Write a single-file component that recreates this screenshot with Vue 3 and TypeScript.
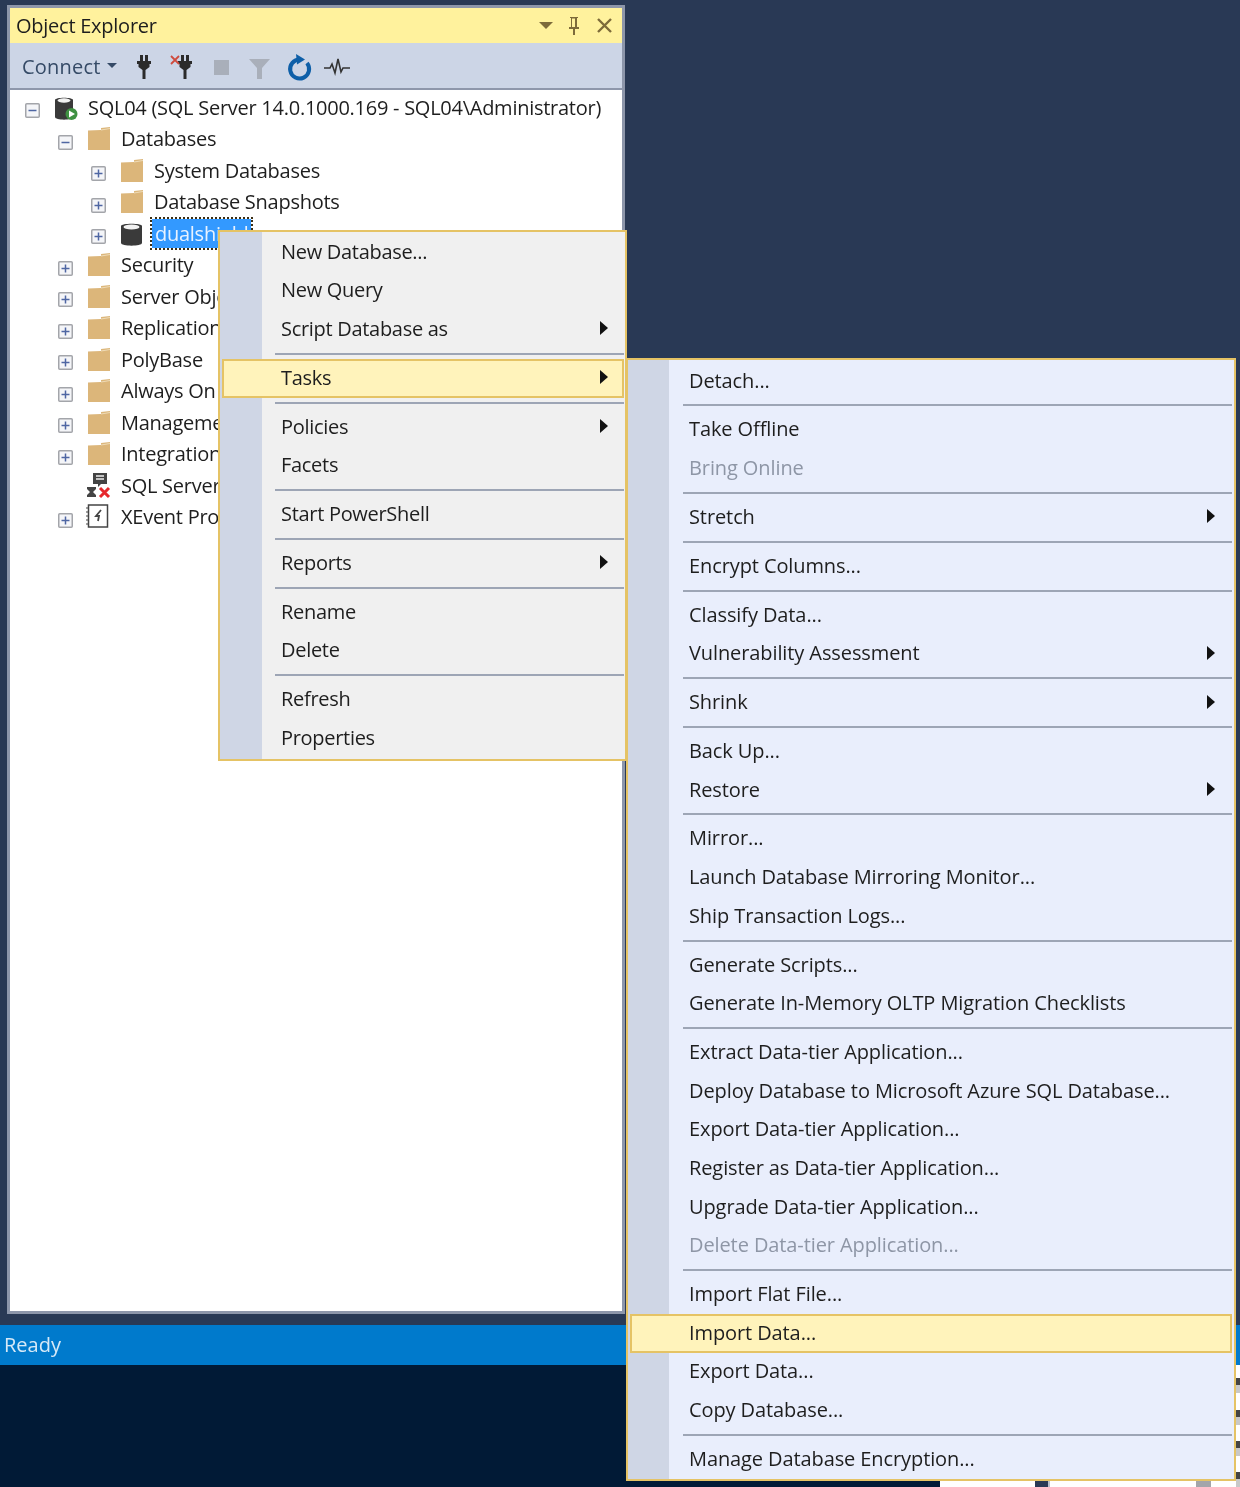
<script setup lang="ts">
type MenuRow = { sep?: boolean; label?: string; arrow?: boolean; off?: boolean; hot?: boolean }
type TreeRow = { label: string; depth: number; box?: '+' | '-' | ''; icon: 'server' | 'folder' | 'db' | 'agent' | 'xevent'; selected?: boolean }

const S: MenuRow = { sep: true }
const mainRows: MenuRow[] = [
  { label: 'New Database...' }, { label: 'New Query' }, { label: 'Script Database as', arrow: true }, S,
  { label: 'Tasks', arrow: true, hot: true }, S,
  { label: 'Policies', arrow: true }, { label: 'Facets' }, S,
  { label: 'Start PowerShell' }, S,
  { label: 'Reports', arrow: true }, S,
  { label: 'Rename' }, { label: 'Delete' }, S,
  { label: 'Refresh' }, { label: 'Properties' }
]
const subRows: MenuRow[] = [
  { label: 'Detach...' }, S,
  { label: 'Take Offline' }, { label: 'Bring Online', off: true }, S,
  { label: 'Stretch', arrow: true }, S,
  { label: 'Encrypt Columns...' }, S,
  { label: 'Classify Data...' }, { label: 'Vulnerability Assessment', arrow: true }, S,
  { label: 'Shrink', arrow: true }, S,
  { label: 'Back Up...' }, { label: 'Restore', arrow: true }, S,
  { label: 'Mirror...' }, { label: 'Launch Database Mirroring Monitor...' }, { label: 'Ship Transaction Logs...' }, S,
  { label: 'Generate Scripts...' }, { label: 'Generate In-Memory OLTP Migration Checklists' }, S,
  { label: 'Extract Data-tier Application...' }, { label: 'Deploy Database to Microsoft Azure SQL Database...' },
  { label: 'Export Data-tier Application...' }, { label: 'Register as Data-tier Application...' },
  { label: 'Upgrade Data-tier Application...' }, { label: 'Delete Data-tier Application...', off: true }, S,
  { label: 'Import Flat File...' }, { label: 'Import Data...', hot: true }, { label: 'Export Data...' }, { label: 'Copy Database...' }, S,
  { label: 'Manage Database Encryption...' }
]
const treeRows: TreeRow[] = [
  { label: 'SQL04 (SQL Server 14.0.1000.169 - SQL04\\Administrator)', depth: 0, box: '-', icon: 'server' },
  { label: 'Databases', depth: 1, box: '-', icon: 'folder' },
  { label: 'System Databases', depth: 2, box: '+', icon: 'folder' },
  { label: 'Database Snapshots', depth: 2, box: '+', icon: 'folder' },
  { label: 'dualshield', depth: 2, box: '+', icon: 'db', selected: true },
  { label: 'Security', depth: 1, box: '+', icon: 'folder' },
  { label: 'Server Objects', depth: 1, box: '+', icon: 'folder' },
  { label: 'Replication', depth: 1, box: '+', icon: 'folder' },
  { label: 'PolyBase', depth: 1, box: '+', icon: 'folder' },
  { label: 'Always On High Availability', depth: 1, box: '+', icon: 'folder' },
  { label: 'Management', depth: 1, box: '+', icon: 'folder' },
  { label: 'Integration Services Catalogs', depth: 1, box: '+', icon: 'folder' },
  { label: 'SQL Server Agent', depth: 1, box: '', icon: 'agent' },
  { label: 'XEvent Profiler', depth: 1, box: '+', icon: 'xevent' }
]
</script>

<template>
  <div class="page">
    <div class="desktop">
      <section class="panel">
        <header class="title">
          <span class="title-text">Object Explorer</span>
          <svg class="title-icons" width="76" height="20" viewBox="0 0 76 20">
            <path d="M1 6h14l-7 7z" fill="#7d6b3a" />
            <path d="M32 1h8v1h-1v9h2v2h-4v6h-2v-6h-4v-2h2V2h-1zM34 2.500v8.500h3V2.500z" fill="#7d6b3a" />
            <path d="M60 3l13 13M73 3L60 16" stroke="#7d6b3a" stroke-width="2.400" fill="none" />
          </svg>
        </header>
        <div class="toolbar">
          <span class="connect">Connect</span>
          <span class="caret"></span>
          <svg class="tools" width="222" height="30" viewBox="0 0 222 30">
            <g fill="#2b2b2b">
              <path d="M9 2h3v6H9zM14 2h3v6h-3zM6 8h14v3h-1.500v3l-4 3v9h-3v-9l-4-3v-3H6z" />
              <path d="M50 2h3v6h-3zM55 2h3v6h-3zM47 8h14v3h-1.500v3l-4 3v9h-3v-9l-4-3v-3H47z" />
            </g>
            <path d="M40 3l8 8M48 3l-8 8" stroke="#cf4b3e" stroke-width="1.800" fill="none" />
            <rect x="83" y="7" width="15" height="15" fill="#a9afba" />
            <path d="M118 6h21l-8 9v11h-5V15z" fill="#a9afba" />
            <path d="M169 6.500a9.500 9.500 0 1 0 7 3.500" stroke="#0e5fa8" stroke-width="4" fill="none" />
            <path d="M165 1l9 5.500-8 5z" fill="#0e5fa8" />
            <path d="M193 15h6l2-4 3 9 3-14 3 13 2-4h7" stroke="#333" stroke-width="1.600" fill="none" />
          </svg>
        </div>
        <ul class="tree">
          <li v-for="row in treeRows" :key="row.label" class="tree-row" :class="`depth-${row.depth}`">
            <span class="box" :class="{ none: !row.box }">
              <svg v-if="row.box" width="15" height="15" viewBox="0 0 15 15">
                <rect x=".75" y=".75" width="13.500" height="13.500" rx="1" fill="#f4f5f8" stroke="#a3a5aa" stroke-width="1.500" />
                <path :d="row.box === '+' ? 'M3.500 7.500h8M7.500 3.500v8' : 'M3.500 7.500h8'" stroke="#4e66a3" stroke-width="1.500" />
              </svg>
            </span>
            <svg class="ico" width="26" height="26" viewBox="0 0 26 26">
              <template v-if="row.icon === 'folder'">
                <path d="M2 7V4.500L15 4V2l9-1v23H2z" fill="#dcb67a" />
                <path d="M15 4l9-1.500" stroke="#efdcb8" stroke-width="1" />
              </template>
              <template v-else-if="row.icon === 'db'">
                <path d="M2 5c0-3 21-3 21 0v17c0 3.500-21 3.500-21 0z" fill="#3a3a3a" />
                <ellipse cx="12.500" cy="6" rx="8" ry="2.500" fill="#f2f2f2" />
              </template>
              <template v-else-if="row.icon === 'server'">
                <path d="M2 5c0-3 18-3 18 0v17c0 3.500-18 3.500-18 0z" fill="#3a3a3a" />
                <ellipse cx="11" cy="5.500" rx="6.500" ry="2.200" fill="#f2f2f2" />
                <circle cx="18.500" cy="19" r="6" fill="#3f9142" />
                <path d="M16 15.500l6 3.500-6 3.500z" fill="#fff" />
              </template>
              <template v-else-if="row.icon === 'agent'">
                <path d="M7 0h14v11h-6l-3 3v-3H7z" fill="#444" />
                <path d="M10 3h8M10 6h8" stroke="#eee" stroke-width="1.500" />
                <path d="M1 14h9v2l-3 3 3 3v2H1v-2l3-3-3-3z" fill="#444" />
                <path d="M14 15l9 9M23 15l-9 9" stroke="#e6282c" stroke-width="3" />
              </template>
              <template v-else>
                <rect x="2.500" y="1" width="19" height="22" fill="#fff" stroke="#444" stroke-width="1.500" />
                <path d="M0 4h3M0 8h3M0 12h3M0 16h3M0 20h3" stroke="#444" />
                <path d="M15 6l-5 6h3l-1 5" stroke="#444" stroke-width="1.800" fill="none" />
              </template>
            </svg>
            <span class="tree-label" :class="{ selected: row.selected }">{{ row.label }}</span>
          </li>
        </ul>
      </section>
      <footer class="status">Ready</footer>
      <div class="taskbar"></div>
    </div>

    <div class="under-bottom">
      <span class="under-white a"></span>
      <span class="under-dark"></span>
      <span class="under-white b"></span>
    </div>
    <div class="under-right"></div>

    <nav class="menu main-menu">
      <template v-for="(row, i) in mainRows" :key="i">
        <div v-if="row.sep" class="sep"></div>
        <div v-else class="item" :class="{ hot: row.hot, off: row.off }">
          <span>{{ row.label }}</span><i v-if="row.arrow" class="arrow"></i>
        </div>
      </template>
    </nav>

    <nav class="menu sub-menu">
      <template v-for="(row, i) in subRows" :key="i">
        <div v-if="row.sep" class="sep"></div>
        <div v-else class="item" :class="{ hot: row.hot, off: row.off }">
          <span>{{ row.label }}</span><i v-if="row.arrow" class="arrow"></i>
        </div>
      </template>
    </nav>
  </div>
</template>

<style>
html, body { margin: 0; background: #293955; }
</style>

<style scoped>
.page {
  position: relative;
  width: 1240px;
  height: 1487px;
  overflow: hidden;
  font-family: "Open Sans", "Noto Sans", sans-serif;
  font-size: 20px;
  color: #1e1e1e;
  background: #293955;
  filter: blur(.35px);
}
.desktop { display: flex; flex-direction: column; height: 100%; }
.panel {
  box-sizing: border-box;
  width: 618px;
  height: 1309px;
  margin: 5px 0 0 7px;
  border: 3px solid #8d96aa;
  display: flex;
  flex-direction: column;
  flex: none;
}
.title {
  height: 35px;
  flex: none;
  background: #fff29d;
  display: flex;
  align-items: center;
  justify-content: space-between;
  padding: 0 8px 0 6px;
}
.title-text { letter-spacing: -.25px; }
.title-icons { display: block; }
.toolbar {
  height: 47px;
  flex: none;
  background: #ccd5e6;
  border-bottom: 2px solid #8e97ab;
  box-sizing: border-box;
  display: flex;
  align-items: center;
  padding: 2px 0 0 12px;
  color: #354a66;
}
.connect { letter-spacing: .2px; }
.caret {
  width: 0;
  height: 0;
  margin: 0 0 2px 6px;
  border: 5px solid transparent;
  border-top-color: #354a66;
  border-bottom: 0;
}
.tools { margin-left: 14px; display: block; position: relative; top: 1px; }
.tree {
  list-style: none;
  margin: 0;
  padding: 2px 0 0;
  flex: 1;
  min-height: 0;
  background: #fff;
  overflow: hidden;
}
.tree-row {
  height: 31.500px;
  display: flex;
  align-items: center;
  white-space: nowrap;
  letter-spacing: -.26px;
}
.depth-0 { padding-left: 15px; }
.depth-1 { padding-left: 48px; }
.depth-2 { padding-left: 81px; }
.box { width: 15px; height: 15px; margin-right: 13px; flex: none; position: relative; top: 3px; }
.box svg { display: block; }
.ico { flex: none; display: block; margin-right: 7px; }
.tree-label { padding: 0 2px; line-height: 28px; }
.tree-label.selected {
  background: #3399ff;
  color: #e8f2ff;
  outline: 2px dotted #3a2d12;
  outline-offset: 0;
  padding: 0 3px;
  line-height: 29px;
}
.status {
  height: 40px;
  margin-top: 11px;
  flex: none;
  background: #007acc;
  color: #d6e9f7;
  padding-left: 4px;
  line-height: 40px;
}
.taskbar { flex: 1; background: #011a36; }

.under-bottom {
  position: absolute;
  left: 940px;
  right: 0;
  top: 1481px;
  bottom: 0;
  display: flex;
}
.under-white { background: #fff; }
.under-white.a { width: 95px; }
.under-dark { width: 13px; background: #293955; border-right: 2px solid #b9bfcc; }
.under-white.b {
  flex: 1;
  background:
    linear-gradient(#a3a5aa, #a3a5aa) 146px 0 / 15px 6px no-repeat,
    #fff;
}
.under-right {
  position: absolute;
  left: 1236px;
  right: 0;
  top: 1365px;
  bottom: 0;
  background: repeating-linear-gradient(to bottom, #fff 0 13px, #444 13px 20px, #c8c8c8 20px 28px, #fff 28px 31.500px);
}

.menu {
  position: absolute;
  box-sizing: border-box;
  border: 2px solid #e5c365;
  white-space: nowrap;
}
.main-menu {
  left: 218px;
  top: 230px;
  width: 409px;
  height: 531px;
  background: linear-gradient(to right, #cfd6e5 0 42px, #f0f0f0 42px);
  padding: .7px 1px 0 2px;
  letter-spacing: -.3px;
}
.sub-menu {
  left: 626px;
  top: 358px;
  width: 610px;
  height: 1123px;
  background: linear-gradient(to right, #cfd6e5 0 41px, #e9eefc 41px);
  padding: 1.700px 2px 0;
  letter-spacing: -.1px;
}
.item {
  box-sizing: border-box;
  height: 38.670px;
  display: flex;
  align-items: center;
  justify-content: space-between;
  border: 2px solid transparent;
  padding-bottom: 2px;
}
.main-menu .item { padding-left: 57px; padding-right: 14px; }
.sub-menu .item { padding-left: 57px; padding-right: 15px; }
.item.hot { background: #fff3bb; border-color: #e5c365; }
.item.off { color: #8e96a6; }
.arrow {
  width: 0;
  height: 0;
  border-left: 8px solid #111;
  border-top: 7px solid transparent;
  border-bottom: 7px solid transparent;
}
.sep { height: 2px; background: #9da5b5; margin: 4.100px 0 4.100px 53px; }
</style>
